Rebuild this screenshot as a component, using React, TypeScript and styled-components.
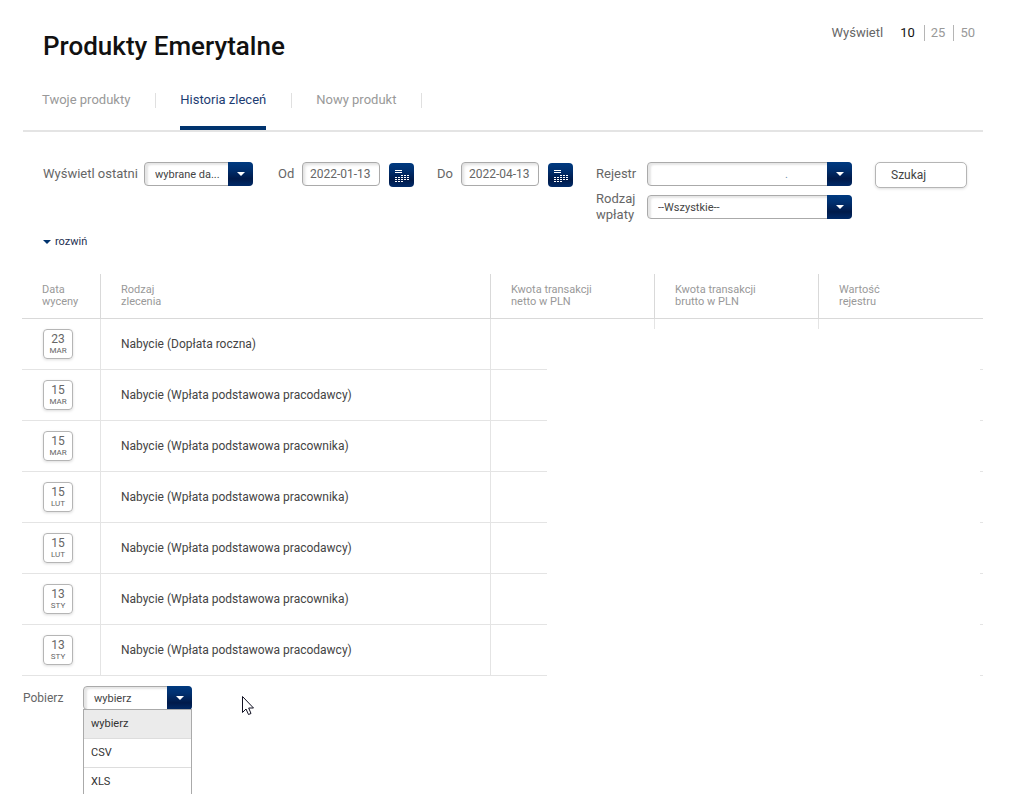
import React from "react";
import styled, { createGlobalStyle, css } from "styled-components";

const GlobalStyle = createGlobalStyle`
  *, *::before, *::after { box-sizing: border-box; }
  html { scrollbar-width: none; }
  body {
    margin: 0;
    background: #fff;
    color: #666;
    font-family: Roboto, "Noto Sans", sans-serif;
    font-size: 12px;
    line-height: 16px;
  }
  button, input, select { font-family: inherit; margin: 0; }
`;

const navy = css`
  background: linear-gradient(#003a80 0%, #003070 30%, #001a4a 70%, #002a68 100%);
`;

const Page = styled.main`
  position: relative;
  min-height: 100vh;
  padding: 24px 43px 0 22px;
`;

const Header = styled.header`
  display: flex;
  justify-content: space-between;
  align-items: flex-start;
  padding: 0 0 0 21px;
`;

const Title = styled.h1`
  margin: 6px 0 0;
  color: #111;
  font-size: 26px;
  font-weight: 500;
  line-height: 32px;
`;

const PageSize = styled.div`
  display: flex;
  align-items: center;
  margin-top: 1px;
  font-size: 13px;
`;

const PageSizeLabel = styled.span`
  margin-right: 8px;
`;

const SizeLink = styled.a<{ $active?: boolean }>`
  padding: 0 8px 0 6px;
  color: ${(p) => (p.$active ? "#111" : "#999")};
  text-decoration: none;
  & + & { border-left: 1px solid #b5b5b5; }
  &:first-of-type { padding: 0 9px; }
`;

const Tabs = styled.nav`
  display: flex;
  margin: 24px 0 0 1px;
  padding-left: 19px;
  border-bottom: 2px solid #e4e4e4;
`;

const TabItem = styled.div`
  display: flex;
  padding-right: 24px;
  &::after {
    content: "";
    width: 1px;
    height: 15px;
    margin: 7px 0 0 25px;
    background: #e0e0e0;
  }
`;

const Tab = styled.a<{ $active?: boolean }>`
  height: 44px;
  padding-top: 6px;
  border-bottom: 4px solid ${(p) => (p.$active ? "#00336e" : "transparent")};
  color: ${(p) => (p.$active ? "#1c3c72" : "#999")};
  font-size: 13px;
  text-decoration: none;
`;

const Filters = styled.form`
  display: flex;
  align-items: flex-start;
  margin-top: 30px;
  padding-left: 21px;
`;

const Field = styled.div<{ $end?: number }>`
  display: flex;
  align-items: center;
  min-height: 24px;
  margin-right: ${(p) => p.$end ?? 0}px;
`;

const Label = styled.label<{ $width: number }>`
  flex: none;
  width: ${(p) => p.$width}px;
  font-size: 13px;
`;

const FieldStack = styled.div`
  display: flex;
  flex-direction: column;
  gap: 5px;
  margin-right: 23px;
`;

const SelectBox = styled.span<{ $width: number }>`
  position: relative;
  display: block;
  flex: none;
  width: ${(p) => p.$width}px;
  height: 24px;
`;

const NativeSelect = styled.select<{ $faint?: boolean }>`
  appearance: none;
  display: block;
  width: 100%;
  height: 24px;
  padding: 0 28px 0 10px;
  border: 1px solid #aaa;
  border-radius: 4px;
  background: #fff;
  box-shadow: inset 3px 2px 2px #e6e6e6;
  color: #444;
  font-size: 11px;
  ${(p) => p.$faint && css`
    padding-right: 63px;
    color: #6d8fae;
    text-align: right;
    text-align-last: right;
  `}
`;

const SelectArrow = styled.span`
  position: absolute;
  top: 0;
  right: 0;
  display: flex;
  align-items: center;
  justify-content: center;
  width: 25px;
  height: 24px;
  border-radius: 0 4px 4px 0;
  pointer-events: none;
  ${navy}
`;

const DateInput = styled.input`
  width: 78px;
  height: 24px;
  padding: 0 7px;
  border: 1px solid #aaa;
  border-radius: 4px;
  box-shadow: inset 2px 2px 3px #e0e0e0;
  color: #666;
  font-size: 12px;
`;

const CalendarButton = styled.button`
  display: block;
  width: 25px;
  height: 24px;
  margin: 1px 0 -1px 9px;
  padding: 0;
  border: 0;
  border-radius: 4px;
  ${navy}
`;

const SearchButton = styled.button`
  width: 92px;
  height: 26px;
  padding: 0 15px;
  border: 1px solid #b5b5b5;
  border-radius: 5px;
  background: #fff;
  box-shadow: 0 1px 3px #ddd;
  color: #444;
  font-size: 12px;
  text-align: left;
`;

const Expand = styled.button`
  display: flex;
  align-items: center;
  gap: 4px;
  margin: 11px 0 0 21px;
  padding: 0;
  border: 0;
  background: none;
  color: #1c3050;
  font-size: 11px;
  line-height: 16px;
`;

const TableWrap = styled.div`
  position: relative;
  margin-top: 24px;
`;

const Table = styled.table`
  width: 100%;
  table-layout: fixed;
  border-collapse: separate;
  border-spacing: 0;
`;

const HeadCell = styled.th<{ $width?: number }>`
  width: ${(p) => (p.$width ? `${p.$width}px` : "auto")};
  height: 45px;
  padding: 0 20px;
  border-bottom: 1px solid #d9d9d9;
  border-right: 1px solid #d9d9d9;
  color: #999;
  font-size: 11px;
  font-weight: 400;
  line-height: 12px;
  text-align: left;
  white-space: pre;
  &:last-child { border-right: 0; }
`;

const Cell = styled.td`
  height: 51px;
  padding: 0 20px;
  border-bottom: 1px solid #e4e4e4;
  border-right: 1px solid #e4e4e4;
  color: #444;
  &:last-child { border-right: 0; }
`;

const DateBadge = styled.time`
  display: flex;
  flex-direction: column;
  align-items: center;
  width: 30px;
  height: 30px;
  margin-left: 1px;
  padding-top: 2px;
  border: 1px solid #b5b5b5;
  border-radius: 4px;
  box-shadow: 0 1px 3px #ddd;
  color: #666;
  font-size: 12px;
  line-height: 14px;
`;

const Month = styled.small`
  font-size: 8px;
  line-height: 10px;
`;

const AmountsCover = styled.div`
  position: absolute;
  inset: 55px 3px 0 525px;
  background: #fff;
`;

const Download = styled.div`
  display: flex;
  align-items: center;
  margin-top: 10px;
  padding-left: 1px;
`;

const DownloadLabel = styled.label`
  width: 60px;
  font-size: 12px;
`;

const Menu = styled.ul`
  position: absolute;
  z-index: 1;
  top: 23px;
  left: 0;
  width: 100%;
  margin: 0;
  padding: 0;
  border: 1px solid #aaa;
  background: #fff;
  list-style: none;
`;

const MenuItem = styled.button<{ $active?: boolean }>`
  display: block;
  width: 100%;
  height: 29px;
  padding: 0 7px 2px;
  border: 0;
  border-bottom: 1px solid #ddd;
  background: ${(p) => (p.$active ? "#ebebeb" : "#fff")};
  color: #333;
  font-size: 11px;
  text-align: left;
`;

const Pointer = styled.svg`
  position: absolute;
  top: 696px;
  left: 242px;
`;

const Triangle = ({ color = "#fff" }: { color?: string }) => (
  <svg width="8" height="4" viewBox="0 0 8 4" aria-hidden="true">
    <path d="M0 0H8L4 4Z" fill={color} />
  </svg>
);

const CalendarIcon = () => (
  <svg width="25" height="24" viewBox="0 0 25 24" display="block" aria-hidden="true">
    <path d="M6 7.5H13M6 9.5H13" stroke="#fff" />
    <path
      d="M12 12.5H20M6 14.5H20M6 16.5H20M6 18.5H14"
      stroke="#fff"
      strokeDasharray="2 1"
    />
  </svg>
);

type SelectProps = {
  id: string;
  width: number;
  options: string[];
  faint?: boolean;
  children?: React.ReactNode;
};

const Select = ({ id, width, options, faint, children }: SelectProps) => (
  <SelectBox $width={width}>
    <NativeSelect id={id} $faint={faint}>
      {options.map((o) => (
        <option key={o}>{o}</option>
      ))}
    </NativeSelect>
    <SelectArrow>
      <Triangle />
    </SelectArrow>
    {children}
  </SelectBox>
);

const DateField = ({ id, label, value }: { id: string; label: string; value: string }) => (
  <Field $end={23}>
    <Label htmlFor={id} $width={24}>{label}</Label>
    <DateInput id={id} defaultValue={value} />
    <CalendarButton type="button" aria-label="Kalendarz">
      <CalendarIcon />
    </CalendarButton>
  </Field>
);

const employer = "Nabycie (Wpłata podstawowa pracodawcy)";
const employee = "Nabycie (Wpłata podstawowa pracownika)";

const orders = [
  { day: "23", month: "MAR", kind: "Nabycie (Dopłata roczna)" },
  { day: "15", month: "MAR", kind: employer },
  { day: "15", month: "MAR", kind: employee },
  { day: "15", month: "LUT", kind: employee },
  { day: "15", month: "LUT", kind: employer },
  { day: "13", month: "STY", kind: employee },
  { day: "13", month: "STY", kind: employer },
];

const formats = ["wybierz", "CSV", "XLS"];

export default function App() {
  return (
    <Page>
      <GlobalStyle />
      <Header>
        <Title>Produkty Emerytalne</Title>
        <PageSize>
          <PageSizeLabel>Wyświetl</PageSizeLabel>
          <SizeLink href="#10" $active>10</SizeLink>
          <SizeLink href="#25">25</SizeLink>
          <SizeLink href="#50">50</SizeLink>
        </PageSize>
      </Header>

      <Tabs>
        <TabItem><Tab href="#produkty">Twoje produkty</Tab></TabItem>
        <TabItem><Tab href="#historia" $active>Historia zleceń</Tab></TabItem>
        <TabItem><Tab href="#nowy">Nowy produkt</Tab></TabItem>
      </Tabs>

      <Filters>
        <Field $end={25}>
          <Label htmlFor="range" $width={101}>Wyświetl ostatni</Label>
          <Select id="range" width={109} options={["wybrane da..."]} />
        </Field>
        <DateField id="from" label="Od" value="2022-01-13" />
        <DateField id="to" label="Do" value="2022-04-13" />
        <FieldStack>
          <Field>
            <Label htmlFor="register" $width={51}>Rejestr</Label>
            <Select id="register" width={205} options={["."]} faint />
          </Field>
          <Field>
            <Label htmlFor="payment" $width={51}>Rodzaj<br />wpłaty</Label>
            <Select id="payment" width={205} options={["--Wszystkie--"]} />
          </Field>
        </FieldStack>
        <SearchButton type="button">Szukaj</SearchButton>
      </Filters>

      <Expand type="button">
        <Triangle color="#00336e" />
        rozwiń
      </Expand>

      <TableWrap>
        <Table>
          <thead>
            <tr>
              <HeadCell $width={79}>{"Data\nwyceny"}</HeadCell>
              <HeadCell $width={390}>{"Rodzaj\nzlecenia"}</HeadCell>
              <HeadCell $width={164}>{"Kwota transakcji\nnetto w PLN"}</HeadCell>
              <HeadCell $width={164}>{"Kwota transakcji\nbrutto w PLN"}</HeadCell>
              <HeadCell>{"Wartość\nrejestru"}</HeadCell>
            </tr>
          </thead>
          <tbody>
            {orders.map((o, i) => (
              <tr key={i}>
                <Cell>
                  <DateBadge>
                    {o.day}
                    <Month>{o.month}</Month>
                  </DateBadge>
                </Cell>
                <Cell>{o.kind}</Cell>
                <Cell />
                <Cell />
                <Cell />
              </tr>
            ))}
          </tbody>
        </Table>
        <AmountsCover />
      </TableWrap>

      <Download>
        <DownloadLabel htmlFor="format">Pobierz</DownloadLabel>
        <Select id="format" width={109} options={formats}>
          <Menu>
            {formats.map((f, i) => (
              <li key={f}>
                <MenuItem type="button" $active={i === 0}>{f}</MenuItem>
              </li>
            ))}
          </Menu>
        </Select>
      </Download>

      <Pointer width="13" height="20" viewBox="0 0 13 20" aria-hidden="true">
        <path
          d="M0.5 0.5V16.5L4 13L6.5 18.5L9 17.5L6.7 12H11.5Z"
          fill="#fff"
          stroke="#112"
        />
      </Pointer>
    </Page>
  );
}
